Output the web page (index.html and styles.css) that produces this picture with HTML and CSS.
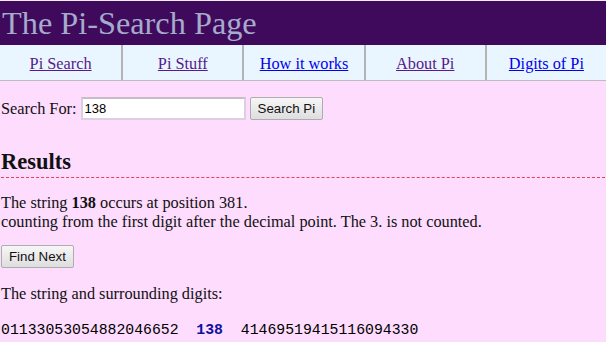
FILE: index.html
```html
<!DOCTYPE html>
<html>
<head>
<meta charset="utf-8">
<link rel="stylesheet" href="styles.css">
</head>
<body>
<div class="header"><h1 class="title">The Pi-Search Page</h1></div>
<nav class="nav">
  <a class="navcell visited" href="#">Pi Search</a>
  <a class="navcell visited" href="#">Pi Stuff</a>
  <a class="navcell" href="#">How it works</a>
  <a class="navcell visited" href="#">About Pi</a>
  <a class="navcell" href="#">Digits of Pi</a>
</nav>
<main class="content">
  <form class="search">
    <label class="label">Search For:</label>
    <input class="field" type="text" value="138">
    <button class="btn" type="button">Search Pi</button>
  </form>
  <h2 class="results">Results</h2>
  <p class="para">The string <b>138</b> occurs at position 381.<br>counting from the first digit after the decimal point. The 3. is not counted.</p>
  <button class="btn findnext" type="button">Find Next</button>
  <p class="para surround">The string and surrounding digits:</p>
  <div class="digits">01133053054882046652&nbsp;&nbsp;<span class="hit">138</span>&nbsp;&nbsp;41469519415116094330</div>
</main>
</body>
</html>
```
FILE: styles.css
```css
html, body { margin: 0; padding: 0; }
body {
  background: #fddcfd;
  font-family: "Liberation Serif", "Times New Roman", serif;
  font-size: 16.3px;
  color: #111;
  border-top: 1px solid #f4eef6;
}
.header {
  background: #400a5c;
  height: 44px;
  display: flex;
  align-items: center;
}
.title {
  margin: 0;
  padding-left: 2px;
  font-weight: normal;
  font-size: 32.3px;
  color: #a4accc;
  line-height: 1;
}
.nav {
  display: grid;
  grid-template-columns: repeat(5, 1fr);
  background: #eaf6ff;
  border-bottom: 1px solid #bdbdbd;
}
.navcell {
  height: 35px;
  display: flex;
  align-items: center;
  justify-content: center;
  padding-top: 2px;
  box-sizing: border-box;
  color: #0000ee;
  border-left: 2px solid #b3b3b3;
}
.navcell:first-child { border-left: none; }
.navcell.visited { color: #551a8b; }
.content { padding: 0 1px; }
.search {
  display: flex;
  align-items: center;
  margin: 16px 0 0;
}
.label { margin-right: 4px; }
.field {
  width: 157px;
  height: 19px;
  border: 2px solid #dccfe0;
  border-top-color: #c8bccb;
  padding: 0 2px;
  font-family: "Liberation Sans", Arial, sans-serif;
  font-size: 13px;
  background: #fff;
  margin: 0 4px 0 0;
}
.btn {
  font-family: "Liberation Sans", Arial, sans-serif;
  font-size: 13.3px;
  color: #111;
  background: linear-gradient(#f6f6f6, #dedede);
  border: 1px solid #adadad;
  border-radius: 2px;
  height: 23px;
  padding: 0 7px;
}
.results {
  margin: 28px 0 0;
  font-size: 22.5px;
  font-weight: bold;
  padding-bottom: 2px;
  border-bottom: 1px dashed #e8405a;
  line-height: 1.2;
}
.para { margin: 15px 0 0; line-height: 19px; }
.findnext { margin-top: 14px; display: block; }
.surround { margin-top: 16px; }
.digits {
  margin-top: 19px;
  font-family: "Liberation Mono", "DejaVu Sans Mono", monospace;
  font-size: 14.8px;
  color: #000;
}
.hit { color: #1010a0; font-weight: bold; }
```
